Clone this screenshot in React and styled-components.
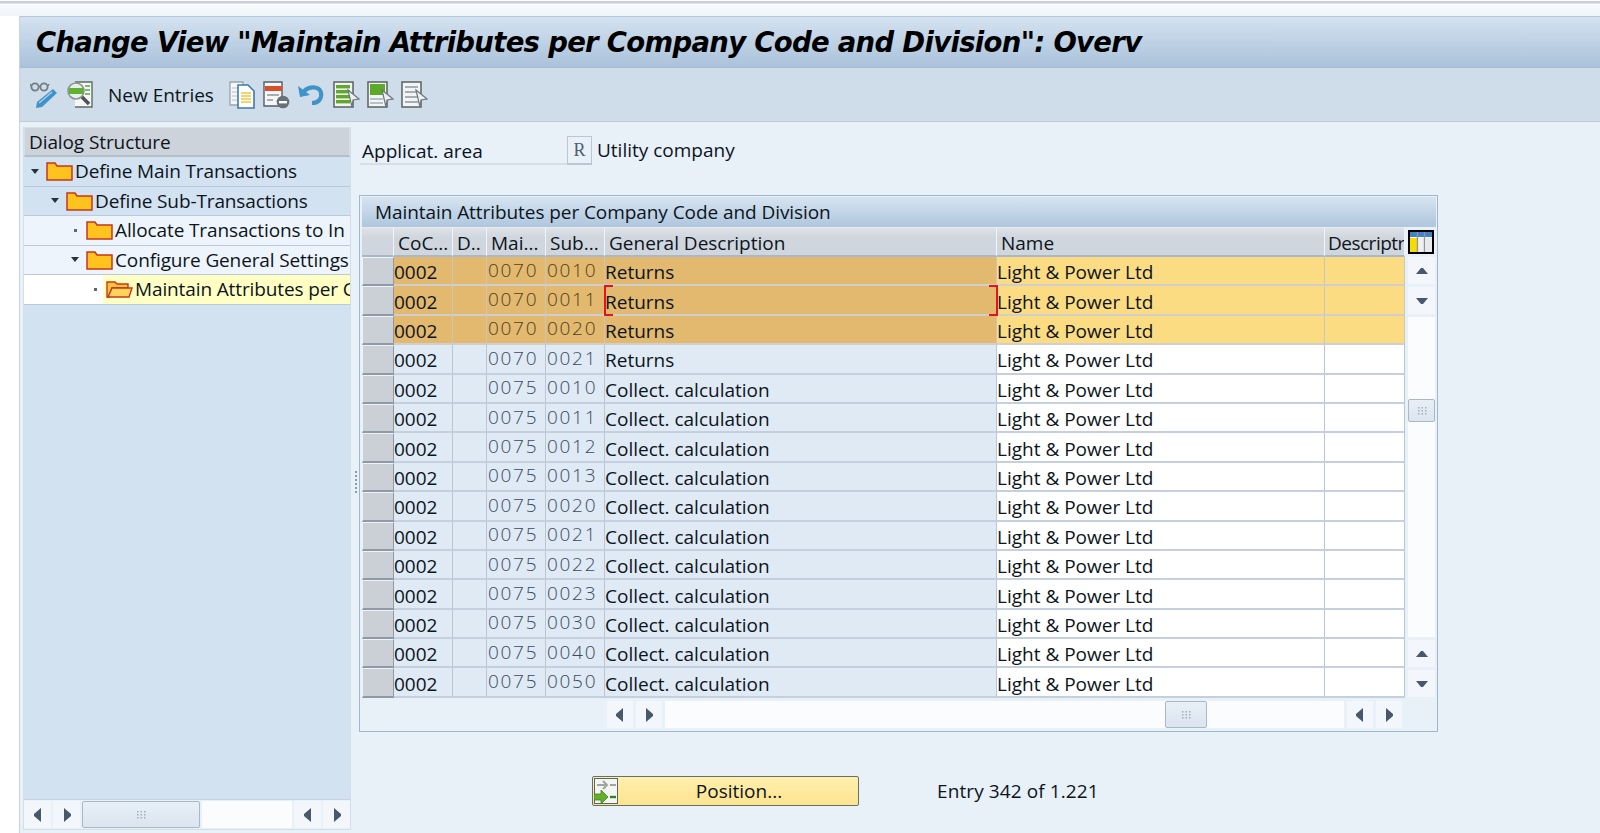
import React from "react";
import styled, { createGlobalStyle, css } from "styled-components";

const GlobalStyle = createGlobalStyle`
  html, body { margin: 0; padding: 0; background: #fff; }
  body { font-family: "Open Sans", "Noto Sans", sans-serif; color: #0c1420; }
  * { box-sizing: border-box; }
`;

const Page = styled.div`
  width: 1600px;
  height: 833px;
  overflow: hidden;
  display: flex;
  flex-direction: column;
  background: #fff;
`;
const TopStrip = styled.div`
  height: 16px;
  flex: none;
  border-top: 1px solid #fff;
  background: linear-gradient(#c9d0da 0, #c9d0da 2px, #f8fafc 3px, #f1f5f9 100%);
`;
const Window = styled.div`
  margin-left: 19px;
  flex: 1;
  min-height: 0;
  display: flex;
  flex-direction: column;
  background: #e8f0f8;
  border-left: 1px solid #c6d4e2;
`;
const TitleBar = styled.div`
  height: 52px;
  flex: none;
  padding: 0 0 0 16px;
  display: flex;
  align-items: center;
  border-top: 1px solid #b5c8da;
  border-bottom: 1px solid #a6bdd4;
  background: linear-gradient(#d4e2f0, #aac2da);
  font-family: "DejaVu Sans", sans-serif;
  font-weight: 700;
  font-style: italic;
  font-size: 27.5px;
  letter-spacing: -0.7px;
  color: #000;
  white-space: nowrap;
  overflow: hidden;
`;
const Toolbar = styled.div`
  height: 54px;
  flex: none;
  padding: 0 0 0 10px;
  display: flex;
  align-items: center;
  background: #cedde9;
  border-bottom: 1px solid #bccbda;
`;
const ToolGroup = styled.div`
  display: flex;
  align-items: center;
  gap: ${(p) => p.$gap}px;
  margin-left: ${(p) => p.$left || 0}px;
`;
const ToolLabel = styled.span`
  margin-left: 15px;
  margin-right: 15px;
  font-size: 19px;
  line-height: 26px;
`;
const Body = styled.div`
  flex: 1;
  min-height: 0;
  display: flex;
`;

/* left tree */
const TreePanel = styled.div`
  width: 328px;
  flex: none;
  margin: 5px 0 3px 3px;
  display: flex;
  flex-direction: column;
  background: #d3e2f0;
  border: 1px solid #d5dee8;
  border-top: 0;
`;
const TreeHead = styled.div`
  height: 30px;
  flex: none;
  padding-left: 4px;
  display: flex;
  align-items: center;
  background: #cdd3da;
  border: 1px solid #d9dee4;
  border-bottom: 2px solid #b6bec8;
  font-size: 19px;
  letter-spacing: -0.1px;
`;
const TreeRow = styled.div`
  height: 29.5px;
  flex: none;
  display: flex;
  align-items: center;
  padding-left: ${(p) => p.$indent}px;
  background: ${(p) => (p.$light ? "#eef4fb" : p.$white ? "#fff" : "#d3e2f0")};
  border-bottom: 1px solid #b9cadb;
  font-size: 19px;
  letter-spacing: -0.12px;
  white-space: nowrap;
  overflow: hidden;
`;
const TreeMark = styled.span`
  width: 16px;
  flex: none;
  margin-right: 3px;
  display: flex;
  justify-content: center;
`;
const Hilite = styled.span`
  display: flex;
  align-items: center;
  align-self: stretch;
  flex: 1;
  padding-left: 3px;
  margin-left: -3px;
  background: #ffffc4;
`;
const TreeLabel = styled.span`
  margin-left: 2px;
`;
const TreeFill = styled.div`
  flex: 1;
`;
const HScroll = styled.div`
  height: 30px;
  flex: none;
  padding: 1px 0;
  display: flex;
  gap: 2px;
  background: #e8f0f8;
  border-top: 1px solid #c5d3e1;
`;
const ArrowBtn = styled.div`
  width: ${(p) => p.$w || 27}px;
  height: ${(p) => p.$h || "auto"};
  flex: none;
  display: flex;
  align-items: center;
  justify-content: center;
  background: #f3f7fb;
`;
const Track = styled.div`
  flex: ${(p) => (p.$grow ? 1 : "none")};
  width: ${(p) => p.$w || 0}px;
  background: #fbfcfd;
  display: flex;
  padding-left: ${(p) => p.$left || 0}px;
`;
const Thumb = styled.div`
  width: ${(p) => p.$w}px;
  height: ${(p) => p.$h || "100%"};
  flex: none;
  display: flex;
  align-items: center;
  justify-content: center;
  background: linear-gradient(#e8eff7, #dbe5ef);
  border: 1px solid #a9b7c6;
  border-radius: 2px;
`;

const Sash = styled.div`
  width: 9px;
  flex: none;
  display: flex;
  flex-direction: column;
  justify-content: center;
  align-items: center;
  gap: 2px;
  padding-top: 8px;
  i { width: 2px; height: 2px; background: #8d9aa8; }
`;

/* right side */
const Main = styled.div`
  flex: 1;
  min-width: 0;
  display: flex;
  flex-direction: column;
  align-items: flex-start;
`;
const FieldRow = styled.div`
  margin: 14px 0 0 0;
  height: 29px;
  display: flex;
  align-items: flex-start;
`;
const FieldLabel = styled.div`
  width: 207px;
  height: 29px;
  padding: 2px 0 0 2px;
  display: flex;
  align-items: center;
  border-bottom: 2px solid #d6dde5;
  font-size: 19px;
`;
const KeyBox = styled.div`
  width: 25px;
  height: 29px;
  display: flex;
  align-items: center;
  justify-content: center;
  background: #e8f0f8;
  border: 1px solid #bcc6d1;
  border-bottom-width: 2px;
  font-family: "Liberation Serif", serif;
  font-size: 18px;
  color: #4f5f70;
`;
const FieldValue = styled.div`
  margin-left: 5px;
  height: 26px;
  line-height: 26px;
  padding-top: 1px;
  font-size: 19px;
`;
const TablePanel = styled.div`
  width: 1079px;
  margin: 30px 0 0 -1px;
  padding: 1px 1px 1px 2px;
  border: 1px solid #9fb6cc;
  background: #e8f0f8;
`;
const TableTitle = styled.div`
  height: 30px;
  padding-left: 13px;
  display: flex;
  align-items: center;
  background: linear-gradient(#d6e4f1, #afc6dd);
  font-size: 19px;
  letter-spacing: -0.07px;
`;
const COLS = "32px 59px 34px 59px 59px 392px 328px 80px";
const HeadWrap = styled.div`
  display: flex;
  height: 30px;
`;
const HeadGrid = styled.div`
  display: grid;
  grid-template-columns: ${COLS};
  width: 1043px;
`;
const HeadCell = styled.div`
  padding: 3px 0 0 ${(p) => (p.$tight ? 3 : 4)}px;
  display: flex;
  align-items: center;
  overflow: hidden;
  white-space: nowrap;
  background: linear-gradient(#dfe3e7, #d0d6dd 35%);
  border-right: 1px solid #f1f3f5;
  border-bottom: 2px solid #a9b7c7;
  border-top: 1px solid #e8ebee;
  font-size: 19px;
  letter-spacing: ${(p) => (p.$tight ? "-0.5px" : "0")};
`;
const ConfigCell = styled.div`
  width: 30px;
  display: flex;
  align-items: center;
  padding-left: 3px;
`;
const TableBody = styled.div`
  display: flex;
`;
const RowsGrid = styled.div`
  width: 1043px;
  display: grid;
  grid-template-columns: ${COLS};
  grid-auto-rows: 29.4px;
  height: 441px;
  overflow: hidden;
`;
const selectedCell = css`
  background: ${(p) => (p.$input ? "#fcdc82" : "#e2b96f")};
`;
const Cell = styled.div`
  position: relative;
  display: flex;
  align-items: center;
  padding: 3px 0 0 0;
  white-space: nowrap;
  font-size: 19px;
  background: ${(p) => (p.$input ? "#fff" : "#dfeaf5")};
  border-right: 1px solid #b9c6d6;
  border-bottom: 2px solid #c4d0dd;
  ${(p) => p.$sel && selectedCell};
  ${(p) => p.$sel && "border-bottom-color: #cfcfcf; border-right-color: #c9c6bb;"};
`;
const NumCell = styled(Cell)`
  padding: 0 0 2px 1px;
  font-weight: 300;
  letter-spacing: 1.7px;
  color: ${(p) => (p.$sel ? "#4f4122" : "#3a4a60")};
`;
const Focus = styled.span`
  position: absolute;
  z-index: 2;
  top: -1px;
  bottom: -2px;
  width: 9px;
  border: 2px solid #e3141c;
  ${(p) => (p.$right ? "right: -2px; border-left: 0;" : "left: -1px; border-right: 0;")};
`;
const Selector = styled.div`
  background: #cbd0d7;
  border: 1px solid #f0f2f4;
  border-right: 1px solid #8f9aa8;
  border-bottom: 2px solid #8f9aa8;
`;
const VScroll = styled.div`
  width: 30px;
  height: 440px;
  padding-left: 3px;
  display: flex;
  flex-direction: column;
  gap: 3px;
`;
const VTrack = styled.div`
  flex: 1;
  background: #fbfcfd;
  padding-top: ${(p) => p.$top}px;
`;
const TableFoot = styled.div`
  display: flex;
  height: 32px;
  padding: 3px 0 2px 245px;
  gap: 3px;
`;
const Bottom = styled.div`
  margin-top: 44px;
  display: flex;
  align-items: center;
  padding-left: 232px;
`;
const PositionBtn = styled.button`
  width: 267px;
  height: 30px;
  padding: 0;
  display: flex;
  align-items: center;
  border: 1px solid #66706a;
  border-radius: 2px;
  background: linear-gradient(#fff0ae, #fde38e);
  font-family: inherit;
  font-size: 19px;
  color: #0c1420;
  span { flex: 1; text-align: center; padding-left: 2px; }
  svg { margin-left: 1px; flex: none; }
`;
const EntryInfo = styled.div`
  margin-left: 78px;
  font-size: 19px;
  letter-spacing: 0.1px;
`;

const Tri = ({ dir }) => {
  const pts = {
    up: "1,8 6,2 8,2 13,8",
    down: "1,2 13,2 8,8 6,8",
    left: "9,0 9,14 2,8 2,6",
    right: "3,0 3,14 10,8 10,6",
  }[dir];
  const wide = dir === "up" || dir === "down";
  return (
    <svg width={wide ? 14 : 12} height={wide ? 10 : 14} viewBox={wide ? "0 0 14 10" : "0 0 12 14"}>
      <polygon points={pts} fill="#47586b" />
    </svg>
  );
};

const Grip = () => (
  <svg width="10" height="8" viewBox="0 0 10 8">
    {[0, 1, 2].map((x) =>
      [0, 1, 2].map((y) => <rect key={`${x}${y}`} x={x * 3.5 + 1} y={y * 3} width="1.5" height="1.5" fill="#a3aeba" />)
    )}
  </svg>
);

const FolderSvg = styled.svg`
  flex: none;
`;
const Folder = ({ open }) => (
  <FolderSvg width="27" height="20" viewBox="0 0 27 20">
    {open ? (
      <>
        <path d="M1 3h8l2 2h11v4H6L3 18H1z" fill="#fbc53a" stroke="#c8351f" strokeWidth="1.4" />
        <path d="M6 9h20l-3 9H2z" fill="#ffd458" stroke="#c8351f" strokeWidth="1.4" />
      </>
    ) : (
      <path d="M1 2h8l2 3h15v14H1z" fill="#ffc31e" stroke="#c8351f" strokeWidth="1.5" />
    )}
  </FolderSvg>
);

const Caret = ({ open }) =>
  open ? (
    <svg width="8" height="5" viewBox="0 0 8 5">
      <polygon points="0,0 8,0 4,5" fill="#27323e" />
    </svg>
  ) : (
    <svg width="3" height="3" viewBox="0 0 3 3">
      <rect width="3" height="3" fill="#5b6774" />
    </svg>
  );

const Icon = ({ children, w = 27 }) => (
  <svg width={w} height="28" viewBox={`0 0 ${w} 28`} fill="none">
    {children}
  </svg>
);

const GlassesPen = () => (
  <Icon>
    <circle cx="5" cy="6" r="3.6" stroke="#747c84" strokeWidth="1.8" />
    <circle cx="14" cy="6" r="3.6" stroke="#747c84" strokeWidth="1.8" />
    <path d="M8.5 5.5h2M1 5L0 3M18 5l1-2" stroke="#747c84" strokeWidth="1.3" />
    <path d="M23 8l4 4-15 14-6 1 1-6z" fill="#3f93c8" />
    <path d="M9 22l13-11" stroke="#a8d4ee" strokeWidth="1.2" />
  </Icon>
);
const SearchDoc = () => (
  <Icon>
    <path d="M9 1h17v25H9" stroke="#5f6b64" strokeWidth="1.4" fill="#f6f8f6" />
    <path d="M19 5h5M19 9h5M19 13h5" stroke="#5f9f4a" strokeWidth="1.6" />
    <circle cx="10" cy="10" r="8" fill="#e9f0ea" stroke="#8b9590" strokeWidth="1.6" />
    <rect x="3" y="7" width="14" height="6" fill="#5fb32e" />
    <path d="M16 16l7 7" stroke="#4d5358" strokeWidth="3.6" />
  </Icon>
);
const CopyDoc = () => (
  <Icon>
    <path d="M1 1h13v23H1z" fill="#f4f6f8" stroke="#9aa4ae" strokeWidth="1.3" />
    <path d="M3 7h6M3 11h6M3 15h6M3 19h6" stroke="#b9c1c9" strokeWidth="1.2" />
    <path d="M9 4h10l6 6v17H9z" fill="#fff" stroke="#3c7ca6" strokeWidth="1.6" />
    <path d="M12 12h10M12 15h10M12 18h10M12 21h10" stroke="#f2c53e" strokeWidth="1.6" />
  </Icon>
);
const DeleteRow = () => (
  <Icon>
    <path d="M1 1h18v24H1z" fill="#f5f6f7" stroke="#555e66" strokeWidth="1.4" />
    <rect x="2" y="5" width="17" height="5" fill="#d8502a" />
    <path d="M4 14h12M4 19h6" stroke="#8d959d" strokeWidth="1.6" />
    <circle cx="20" cy="21" r="6.3" fill="#676f77" />
    <rect x="16" y="20" width="8" height="2.4" fill="#fff" />
  </Icon>
);
const Undo = () => (
  <Icon>
    <path d="M15 22C22 22 25 17 24 12C23 6 14 4 7 10" stroke="#3f93c8" strokeWidth="4.2" fill="none" />
    <polygon points="1,5 3,16 13,14" fill="#3f93c8" />
  </Icon>
);
const SelectDoc = ({ mode }) => (
  <Icon>
    <path d="M1 1h19v25H1z" fill="#f3f4f5" stroke="#59625f" strokeWidth="1.5" />
    {mode === "all" &&
      [4, 9, 14, 19].map((y) => <rect key={y} x="3" y={y} width="14" height="3.4" fill="#5fa92a" />)}
    {mode === "block" && (
      <>
        <rect x="3" y="3" width="15" height="11" fill="#5fa92a" />
        <path d="M3 18h13M3 22h13" stroke="#a5adb5" strokeWidth="1.6" />
      </>
    )}
    {mode === "none" && <path d="M4 6h13M4 11h13M4 16h13M4 21h13" stroke="#a5adb5" strokeWidth="1.8" />}
    <path d="M15 9l11 9-6 1-1 7z" fill="#eef1f3" stroke="#6e767d" strokeWidth="1.2" />
  </Icon>
);

const TableConfig = () => (
  <svg width="26" height="24" viewBox="0 0 26 24">
    <rect x="1" y="1" width="24" height="22" fill="#fff" stroke="#000" strokeWidth="2" />
    <rect x="2" y="2" width="22" height="5" fill="#3f84c6" />
    <rect x="2" y="8" width="7" height="14" fill="#f7dc00" />
    <rect x="11" y="8" width="5" height="14" fill="#eef0f2" />
    <rect x="18" y="8" width="6" height="14" fill="#e8eaed" />
    <path d="M9.5 2v20M16.5 2v20" stroke="#8d969f" strokeWidth="1.4" />
  </svg>
);

const PositionIcon = () => (
  <svg width="24" height="26" viewBox="0 0 24 26">
    <rect x=".5" y=".5" width="23" height="25" fill="#f4f5f3" stroke="#5c6660" />
    <path d="M3 7h9M9 3l4 4-4 4" stroke="#9ca5a0" strokeWidth="2" fill="none" />
    <path d="M16 7h6" stroke="#9ca5a0" strokeWidth="2" />
    <path d="M0 16h7v-4l7 7-7 7v-4H0z" fill="#62b02c" stroke="#3f7f1a" strokeWidth=".8" />
    <path d="M16 19h6" stroke="#2f7f24" strokeWidth="2.4" />
  </svg>
);

const rows = [
  ["0070", "0010", "Returns", true],
  ["0070", "0011", "Returns", true],
  ["0070", "0020", "Returns", true],
  ["0070", "0021", "Returns"],
  ["0075", "0010", "Collect. calculation"],
  ["0075", "0011", "Collect. calculation"],
  ["0075", "0012", "Collect. calculation"],
  ["0075", "0013", "Collect. calculation"],
  ["0075", "0020", "Collect. calculation"],
  ["0075", "0021", "Collect. calculation"],
  ["0075", "0022", "Collect. calculation"],
  ["0075", "0023", "Collect. calculation"],
  ["0075", "0030", "Collect. calculation"],
  ["0075", "0040", "Collect. calculation"],
  ["0075", "0050", "Collect. calculation"],
];

const tree = [
  { label: "Define Main Transactions", indent: 3, open: true },
  { label: "Define Sub-Transactions", indent: 23, open: true },
  { label: "Allocate Transactions to In", indent: 43, light: true },
  { label: "Configure General Settings", indent: 43, open: true, light: true },
];

export default function App() {
  return (
    <Page>
      <GlobalStyle />
      <TopStrip />
      <Window>
        <TitleBar>Change View "Maintain Attributes per Company Code and Division": Overv</TitleBar>
        <Toolbar>
          <ToolGroup $gap={9}>
            <GlassesPen />
            <SearchDoc />
          </ToolGroup>
          <ToolLabel>New Entries</ToolLabel>
          <ToolGroup $gap={7}>
            <CopyDoc />
            <DeleteRow />
            <Undo />
          </ToolGroup>
          <ToolGroup $gap={7} $left={9}>
            <SelectDoc mode="all" />
            <SelectDoc mode="block" />
            <SelectDoc mode="none" />
          </ToolGroup>
        </Toolbar>
        <Body>
          <TreePanel>
            <TreeHead>Dialog Structure</TreeHead>
            {tree.map((t) => (
              <TreeRow key={t.label} $indent={t.indent} $light={t.light}>
                <TreeMark>
                  <Caret open={t.open} />
                </TreeMark>
                <Folder />
                <TreeLabel>{t.label}</TreeLabel>
              </TreeRow>
            ))}
            <TreeRow $indent={63} $white>
              <TreeMark>
                <Caret />
              </TreeMark>
              <Hilite>
                <Folder open />
                <TreeLabel>Maintain Attributes per C</TreeLabel>
              </Hilite>
            </TreeRow>
            <TreeFill />
            <HScroll>
              <ArrowBtn><Tri dir="left" /></ArrowBtn>
              <ArrowBtn><Tri dir="right" /></ArrowBtn>
              <Thumb $w={118}><Grip /></Thumb>
              <Track $grow />
              <ArrowBtn><Tri dir="left" /></ArrowBtn>
              <ArrowBtn><Tri dir="right" /></ArrowBtn>
            </HScroll>
          </TreePanel>
          <Sash>
            <i /><i /><i /><i /><i /><i />
          </Sash>
          <Main>
            <FieldRow>
              <FieldLabel>Applicat. area</FieldLabel>
              <KeyBox>R</KeyBox>
              <FieldValue>Utility company</FieldValue>
            </FieldRow>
            <TablePanel>
              <TableTitle>Maintain Attributes per Company Code and Division</TableTitle>
              <HeadWrap>
                <HeadGrid>
                  <HeadCell />
                  <HeadCell>CoC...</HeadCell>
                  <HeadCell>D..</HeadCell>
                  <HeadCell>Mai...</HeadCell>
                  <HeadCell>Sub...</HeadCell>
                  <HeadCell>General Description</HeadCell>
                  <HeadCell>Name</HeadCell>
                  <HeadCell $tight>Descriptr</HeadCell>
                </HeadGrid>
                <ConfigCell>
                  <TableConfig />
                </ConfigCell>
              </HeadWrap>
              <TableBody>
                <RowsGrid>
                  {rows.map(([main, sub, desc, sel], i) => (
                    <React.Fragment key={main + sub}>
                      <Selector />
                      <Cell $sel={sel}>0002</Cell>
                      <Cell $sel={sel} />
                      <NumCell $sel={sel}>{main}</NumCell>
                      <NumCell $sel={sel}>{sub}</NumCell>
                      <Cell $sel={sel}>
                        {desc}
                        {i === 1 && (
                          <>
                            <Focus />
                            <Focus $right />
                          </>
                        )}
                      </Cell>
                      <Cell $sel={sel} $input>Light &amp; Power Ltd</Cell>
                      <Cell $sel={sel} $input />
                    </React.Fragment>
                  ))}
                </RowsGrid>
                <VScroll>
                  <ArrowBtn $w={27} $h="27px"><Tri dir="up" /></ArrowBtn>
                  <ArrowBtn $w={27} $h="27px"><Tri dir="down" /></ArrowBtn>
                  <VTrack $top={82}>
                    <Thumb $w={27} $h="23px"><Grip /></Thumb>
                  </VTrack>
                  <ArrowBtn $w={27} $h="27px"><Tri dir="up" /></ArrowBtn>
                  <ArrowBtn $w={27} $h="27px"><Tri dir="down" /></ArrowBtn>
                </VScroll>
              </TableBody>
              <TableFoot>
                <ArrowBtn $w={26}><Tri dir="left" /></ArrowBtn>
                <ArrowBtn $w={26}><Tri dir="right" /></ArrowBtn>
                <Track $w={679} $left={500}>
                  <Thumb $w={42}><Grip /></Thumb>
                </Track>
                <ArrowBtn $w={26}><Tri dir="left" /></ArrowBtn>
                <ArrowBtn $w={26}><Tri dir="right" /></ArrowBtn>
              </TableFoot>
            </TablePanel>
            <Bottom>
              <PositionBtn>
                <PositionIcon />
                <span>Position...</span>
              </PositionBtn>
              <EntryInfo>Entry 342 of 1.221</EntryInfo>
            </Bottom>
          </Main>
        </Body>
      </Window>
    </Page>
  );
}
